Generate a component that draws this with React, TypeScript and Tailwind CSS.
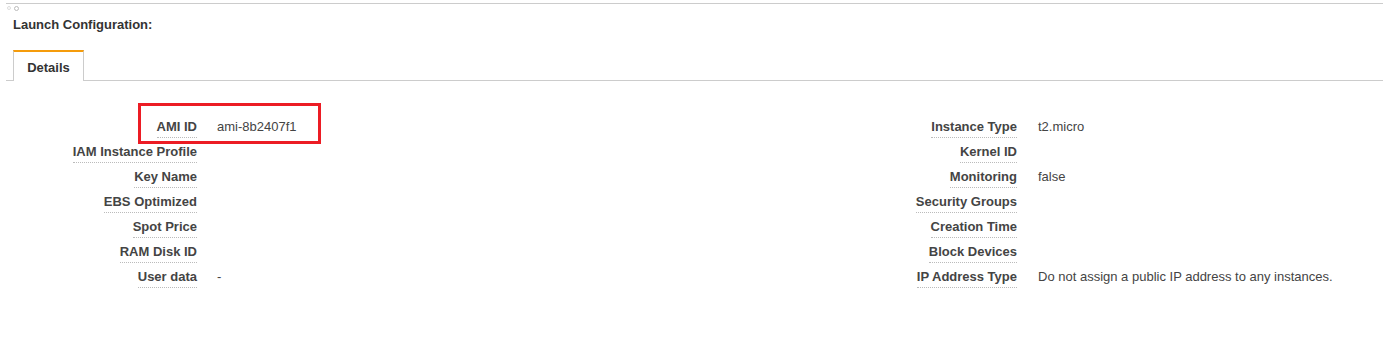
import React from "react";

const left: [string, string][] = [
  ["AMI ID", "ami-8b2407f1"],
  ["IAM Instance Profile", ""],
  ["Key Name", ""],
  ["EBS Optimized", ""],
  ["Spot Price", ""],
  ["RAM Disk ID", ""],
  ["User data", "-"],
];

const right: [string, string][] = [
  ["Instance Type", "t2.micro"],
  ["Kernel ID", ""],
  ["Monitoring", "false"],
  ["Security Groups", ""],
  ["Creation Time", ""],
  ["Block Devices", ""],
  ["IP Address Type", "Do not assign a public IP address to any instances."],
];

function Rows({ rows, labelW, gap }: { rows: [string, string][]; labelW: string; gap: string }) {
  return (
    <div className="flex flex-col">
      {rows.map(([k, v]) => (
        <div key={k} className="flex h-[25px] items-start">
          <div className={`${labelW} flex justify-end shrink-0`}>
            <span className="font-bold text-[#444] leading-[18px] pb-[1px] border-b border-dotted border-[#bbb]">
              {k}
            </span>
          </div>
          <div className={`${gap} leading-[18px] text-[#444] whitespace-nowrap`}>{v}</div>
        </div>
      ))}
    </div>
  );
}

export default function App() {
  return (
    <div
      className="relative w-[1383px] h-[341px] bg-white text-[13px] overflow-hidden"
      style={{ fontFamily: '"Liberation Sans", Arial, sans-serif' }}
    >
      <div className="pl-[6px] pt-[3px]">
        <div className="border-t border-[#ccc] h-[1px]" />
        <div className="relative h-[9px]">
          <span className="absolute left-[1px] top-[2px] w-[4px] h-[4px] rounded-full border border-[#ddd]" />
          <span className="absolute left-[8px] top-[2px] w-[5px] h-[5px] rounded-full border border-[#bbb]" />
        </div>
        <div className="pl-[7px] pt-[3px] h-[37px] font-bold text-[#333] leading-[18px]">Launch Configuration:</div>
        <div className="flex items-end h-[31px]">
          <div className="w-[7px] border-b border-[#ccc] h-full" />
          <div className="w-[71px] h-[31px] border-t-2 border-t-[#f59c0c] border-x border-[#ccc] flex items-center justify-center font-bold text-[#333] pt-[3px]">
            Details
          </div>
          <div className="flex-1 border-b border-[#ccc] h-full" />
        </div>
        <div className="pt-[37px] flex">
          <div className="w-[820px]">
            <Rows rows={left} labelW="w-[191px]" gap="pl-[20px]" />
          </div>
          <div>
            <Rows rows={right} labelW="w-[191px]" gap="pl-[21px]" />
          </div>
        </div>
      </div>
      <div className="absolute left-[138px] top-[103px] w-[183px] h-[41px] border-[3px] border-[#ec1c24]" />
    </div>
  );
}
